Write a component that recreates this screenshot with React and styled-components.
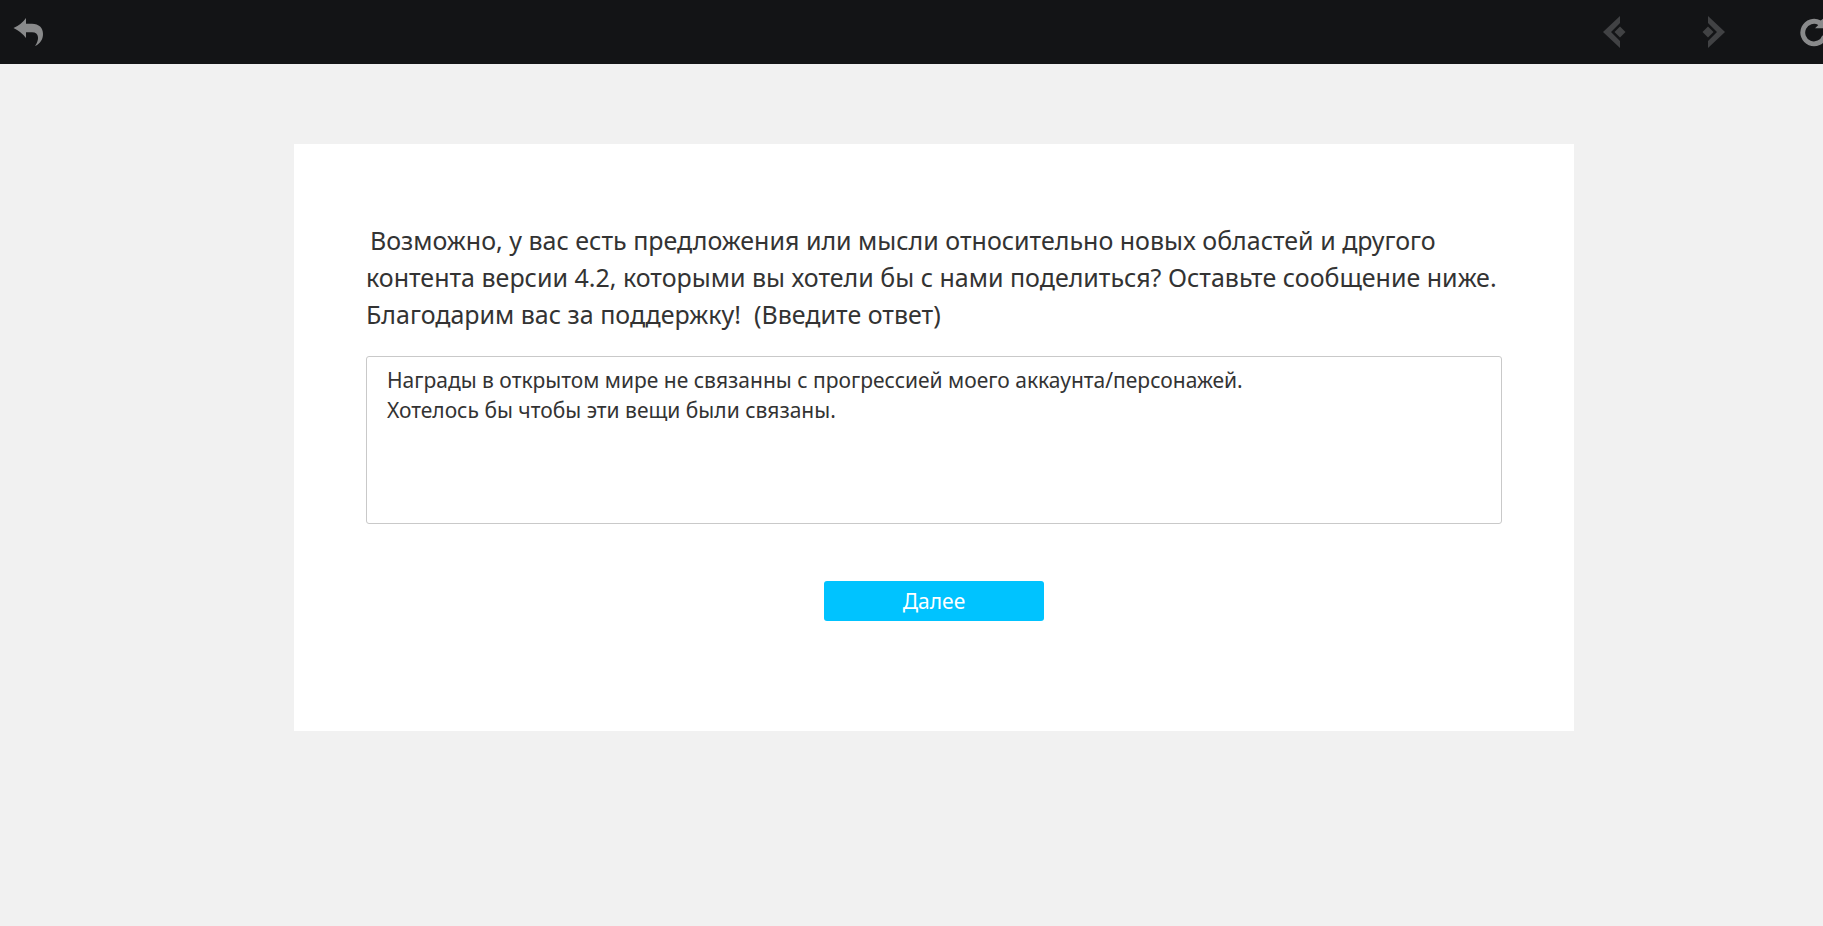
import React, { useState } from 'react';
import styled, { createGlobalStyle } from 'styled-components';

const GlobalStyle = createGlobalStyle`
  * { box-sizing: border-box; }
  html, body { margin: 0; background: #f1f1f1; }
  body, button, textarea { font-family: "Noto Sans", "Open Sans", sans-serif; }
`;

const Viewport = styled.div`
  overflow: hidden;
  min-height: 100vh;
`;

/* The survey frame runs a little past the right edge of the window. */
const Frame = styled.div`
  width: calc(100% + 45px);
`;

const Toolbar = styled.header`
  display: flex;
  align-items: center;
  justify-content: space-between;
  height: 64px;
  padding-right: 26px;
  background: #131416;
`;

const ToolGroup = styled.nav`
  display: flex;
  gap: 44px;
`;

const ToolButton = styled.button`
  display: flex;
  align-items: center;
  justify-content: center;
  width: 56px;
  height: 64px;
  padding: 0;
  border: 0;
  background: none;
  color: ${({ $dim }) => ($dim ? '#414244' : '#898a8b')};
  cursor: pointer;
`;

const Icon = styled.svg`
  display: block;
  width: 32px;
  height: 32px;
  fill: currentColor;
`;

const Main = styled.main`
  display: flex;
  justify-content: center;
  padding: 80px 24px;
`;

const Card = styled.form`
  display: flex;
  flex-direction: column;
  align-items: center;
  width: 100%;
  max-width: 1280px;
  padding: 78px 72px 110px;
  background: #fff;
`;

const Question = styled.label`
  align-self: stretch;
  margin-bottom: 23px;
  color: #333;
  font-size: 25px;
  line-height: 37px;
`;

const QuestionLine = styled.span`
  display: block;
  text-indent: ${({ $indent }) => ($indent ? '4px' : '0')};
`;

const Answer = styled.textarea`
  display: block;
  width: 100%;
  height: 168px;
  margin-bottom: 57px;
  padding: 8px 20px;
  border: 1px solid #c9c9c9;
  border-radius: 3px;
  outline: 0;
  resize: none;
  background: #fff;
  color: #333;
  font-size: 21px;
  line-height: 30px;
`;

const NextButton = styled.button`
  width: 220px;
  height: 40px;
  padding: 0;
  border: 0;
  border-radius: 3px;
  background: #00c3ff;
  color: #fff;
  font-size: 21px;
  line-height: 40px;
  cursor: pointer;
`;

const initialAnswer =
  'Награды в открытом мире не связанны с прогрессией моего аккаунта/персонажей.\nХотелось бы чтобы эти вещи были связаны.';

export default function App() {
  const [answer, setAnswer] = useState(initialAnswer);
  return (
    <Viewport>
      <GlobalStyle />
      <Frame>
        <Toolbar>
          <ToolButton type="button" aria-label="Выйти">
            <Icon viewBox="0 0 32 32" aria-hidden="true">
              <path d="M1.5 12Q9.5 8.5 14 2V7.8H20C27 7.8 31 12 31 18C31 23.5 28 28 23 30C27.5 24 27.5 16.2 20 16.2H14V22Q9 15.5 1.5 12Z" />
            </Icon>
          </ToolButton>
          <ToolGroup>
            <ToolButton type="button" $dim aria-label="Назад">
              <Icon viewBox="0 0 32 32" aria-hidden="true">
                <path d="M22 0V7L13 16 22 25V32L5 16Z" />
                <path d="M22 10.5 27.5 16 22 21.5 16.5 16Z" />
              </Icon>
            </ToolButton>
            <ToolButton type="button" $dim aria-label="Вперёд">
              <Icon viewBox="0 0 32 32" aria-hidden="true">
                <path d="M10 0V7L19 16 10 25V32L27 16Z" />
                <path d="M10 10.5 15.5 16 10 21.5 4.5 16Z" />
              </Icon>
            </ToolButton>
            <ToolButton type="button" aria-label="Обновить">
              <Icon viewBox="0 0 32 32" aria-hidden="true">
                <path d="M28 0V12.3H17L20.3 8.9A8.8 8.8 0 1 0 24.3 19.5L29 21A13.7 13.7 0 1 1 22.8 4.6Z" />
              </Icon>
            </ToolButton>
          </ToolGroup>
        </Toolbar>
        <Main>
          <Card onSubmit={(e) => e.preventDefault()}>
            <Question htmlFor="answer">
              <QuestionLine $indent>
                Возможно, у вас есть предложения или мысли относительно новых областей и другого
              </QuestionLine>
              <QuestionLine>
                контента версии 4.2, которыми вы хотели бы с нами поделиться? Оставьте сообщение ниже.
              </QuestionLine>
              <QuestionLine>Благодарим вас за поддержку!&nbsp; (Введите ответ)</QuestionLine>
            </Question>
            <Answer
              id="answer"
              spellCheck={false}
              value={answer}
              onChange={(e) => setAnswer(e.target.value)}
            />
            <NextButton type="submit">Далее</NextButton>
          </Card>
        </Main>
      </Frame>
    </Viewport>
  );
}
